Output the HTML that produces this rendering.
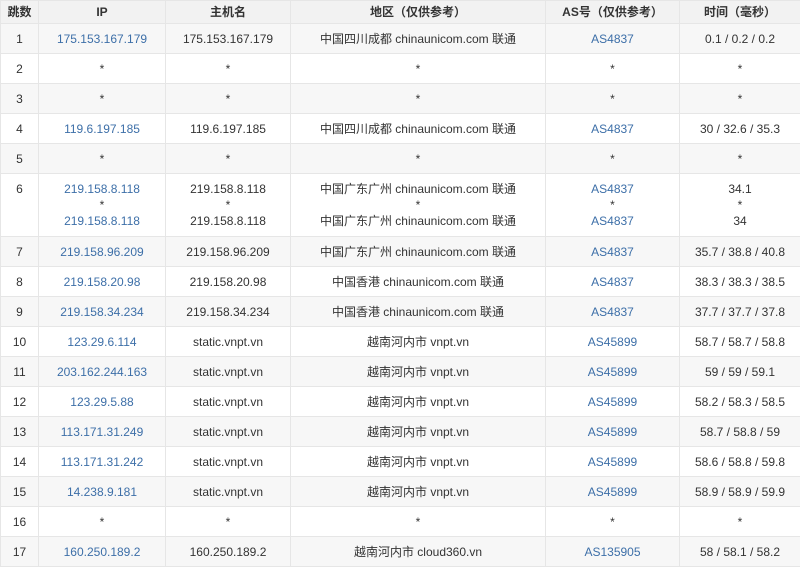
<!DOCTYPE html>
<html><head><meta charset="utf-8"><style>
body{margin:0;width:800px;height:566px;overflow:hidden;background:#fff;font-family:"Liberation Sans","Noto Sans CJK SC",sans-serif;font-size:12px;color:#333}
table{border-collapse:collapse;width:800px;table-layout:fixed}
td,th{border:1px solid #e6e6e6;text-align:center;padding:0;height:29px;line-height:16px}
th{height:22px;font-weight:bold;background:#f2f2f2;color:#333}
tr:nth-child(even) td{background:#f7f7f7}
tr:nth-child(odd) td{background:#fff}
a{color:#3d6fa8;text-decoration:none}
td.m{vertical-align:top;padding-top:7px;height:55px}
td.m div.s{line-height:16px}
</style></head><body>
<table>
<colgroup><col style="width:38px"><col style="width:127px"><col style="width:125px"><col style="width:255px"><col style="width:134px"><col style="width:121px"></colgroup>
<tr><th>跳数</th><th>IP</th><th>主机名</th><th>地区（仅供参考）</th><th>AS号（仅供参考）</th><th>时间（毫秒）</th></tr>
<tr><td>1</td><td><a>175.153.167.179</a></td><td>175.153.167.179</td><td>中国四川成都 chinaunicom.com 联通</td><td><a>AS4837</a></td><td>0.1 / 0.2 / 0.2</td></tr>
<tr><td>2</td><td>*</td><td>*</td><td>*</td><td>*</td><td>*</td></tr>
<tr><td>3</td><td>*</td><td>*</td><td>*</td><td>*</td><td>*</td></tr>
<tr><td>4</td><td><a>119.6.197.185</a></td><td>119.6.197.185</td><td>中国四川成都 chinaunicom.com 联通</td><td><a>AS4837</a></td><td>30 / 32.6 / 35.3</td></tr>
<tr><td>5</td><td>*</td><td>*</td><td>*</td><td>*</td><td>*</td></tr>
<tr><td class="m">6</td><td class="m"><a>219.158.8.118</a><br>*<br><a>219.158.8.118</a></td><td class="m">219.158.8.118<br>*<br>219.158.8.118</td><td class="m">中国广东广州 chinaunicom.com 联通<br>*<br>中国广东广州 chinaunicom.com 联通</td><td class="m"><a>AS4837</a><br>*<br><a>AS4837</a></td><td class="m">34.1<br>*<br>34</td></tr>
<tr><td>7</td><td><a>219.158.96.209</a></td><td>219.158.96.209</td><td>中国广东广州 chinaunicom.com 联通</td><td><a>AS4837</a></td><td>35.7 / 38.8 / 40.8</td></tr>
<tr><td>8</td><td><a>219.158.20.98</a></td><td>219.158.20.98</td><td>中国香港 chinaunicom.com 联通</td><td><a>AS4837</a></td><td>38.3 / 38.3 / 38.5</td></tr>
<tr><td>9</td><td><a>219.158.34.234</a></td><td>219.158.34.234</td><td>中国香港 chinaunicom.com 联通</td><td><a>AS4837</a></td><td>37.7 / 37.7 / 37.8</td></tr>
<tr><td>10</td><td><a>123.29.6.114</a></td><td>static.vnpt.vn</td><td>越南河内市 vnpt.vn</td><td><a>AS45899</a></td><td>58.7 / 58.7 / 58.8</td></tr>
<tr><td>11</td><td><a>203.162.244.163</a></td><td>static.vnpt.vn</td><td>越南河内市 vnpt.vn</td><td><a>AS45899</a></td><td>59 / 59 / 59.1</td></tr>
<tr><td>12</td><td><a>123.29.5.88</a></td><td>static.vnpt.vn</td><td>越南河内市 vnpt.vn</td><td><a>AS45899</a></td><td>58.2 / 58.3 / 58.5</td></tr>
<tr><td>13</td><td><a>113.171.31.249</a></td><td>static.vnpt.vn</td><td>越南河内市 vnpt.vn</td><td><a>AS45899</a></td><td>58.7 / 58.8 / 59</td></tr>
<tr><td>14</td><td><a>113.171.31.242</a></td><td>static.vnpt.vn</td><td>越南河内市 vnpt.vn</td><td><a>AS45899</a></td><td>58.6 / 58.8 / 59.8</td></tr>
<tr><td>15</td><td><a>14.238.9.181</a></td><td>static.vnpt.vn</td><td>越南河内市 vnpt.vn</td><td><a>AS45899</a></td><td>58.9 / 58.9 / 59.9</td></tr>
<tr><td>16</td><td>*</td><td>*</td><td>*</td><td>*</td><td>*</td></tr>
<tr><td>17</td><td><a>160.250.189.2</a></td><td>160.250.189.2</td><td>越南河内市 cloud360.vn</td><td><a>AS135905</a></td><td>58 / 58.1 / 58.2</td></tr>
</table>
</body></html>
